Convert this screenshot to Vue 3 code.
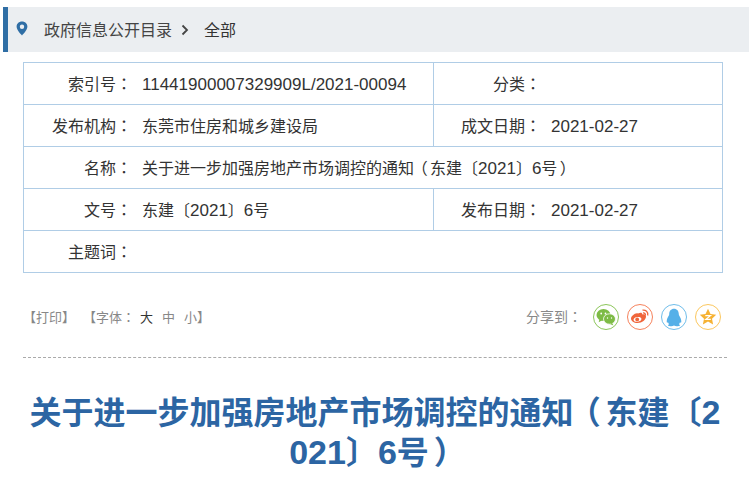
<template>
  <div class="page">
    <!-- 面包屑 -->
    <div class="crumb">
      <svg class="pin" width="12" height="15" viewBox="0 0 12 15">
        <path fill="#2f6ea5" fill-rule="evenodd" d="M6 .5C2.900.5.600 2.800.600 5.600c0 3.400 3.600 7 5.400 8.900 1.800-1.900 5.400-5.500 5.400-8.900C11.400 2.800 9.100.5 6 .5zM6 3.500a2.200 2.200 0 1 1 0 4.400 2.200 2.200 0 0 1 0-4.400z" />
      </svg>
      <span class="crumb-link">政府信息公开目录</span>
      <svg class="arrow" width="8" height="12" viewBox="0 0 8 12">
        <path fill="none" stroke="#444" stroke-width="1.800" d="M1.500 1.500 6 6l-4.500 4.500" />
      </svg>
      <span class="crumb-now">全部</span>
    </div>

    <!-- 信息表 -->
    <table class="info">
      <tbody>
        <tr>
          <td class="label">索引号<span class="p">：</span></td>
          <td class="value"><span class="num">11441900007329909L/2021-00094</span></td>
          <td class="label split">分类<span class="p">：</span></td>
          <td class="value"></td>
        </tr>
        <tr>
          <td class="label">发布机构<span class="p">：</span></td>
          <td class="value">东莞市住房和城乡建设局</td>
          <td class="label split">成文日期<span class="p">：</span></td>
          <td class="value"><span class="num">2021-02-27</span></td>
        </tr>
        <tr>
          <td class="label">名称<span class="p">：</span></td>
          <td class="value" colspan="3">关于进一步加强房地产市场调控的通知<span class="lp">（</span>东建〔<span class="num">2021</span>〕<span class="num">6</span>号<span class="rp">）</span></td>
        </tr>
        <tr>
          <td class="label">文号<span class="p">：</span></td>
          <td class="value">东建〔<span class="num">2021</span>〕<span class="num">6</span>号</td>
          <td class="label split">发布日期<span class="p">：</span></td>
          <td class="value"><span class="num">2021-02-27</span></td>
        </tr>
        <tr>
          <td class="label">主题词<span class="p">：</span></td>
          <td class="value" colspan="3"></td>
        </tr>
      </tbody>
    </table>

    <!-- 工具栏 -->
    <div class="tools">
      <div class="print">
        <span>【打印】</span>
        <span class="font-size">【字体<span class="p">：</span><b class="on">大</b><i>中</i><i>小</i>】</span>
      </div>
      <div class="share">
        <span class="share-label">分享到<span class="p">：</span></span>
        <span class="circle wx">
          <svg width="20" height="18" viewBox="0 0 20 18">
            <ellipse cx="7.500" cy="7" rx="7" ry="6" fill="#7dbb45" />
            <path d="M3.500 11l-.8 3.200 3.500-2z" fill="#7dbb45" />
            <ellipse cx="13.500" cy="11" rx="6" ry="5.200" fill="#7dbb45" stroke="#fff" stroke-width=".8" />
            <path d="M16 15l1.500 2.500-3.500-1.500z" fill="#7dbb45" />
            <circle cx="5.200" cy="5.500" r=".9" fill="#fff" />
            <circle cx="9.500" cy="5.500" r=".9" fill="#fff" />
            <circle cx="11.500" cy="10" r=".7" fill="#fff" />
            <circle cx="15.500" cy="10" r=".7" fill="#fff" />
          </svg>
        </span>
        <span class="circle wb">
          <svg width="20" height="18" viewBox="0 0 20 18">
            <path fill="#f0663c" fill-rule="evenodd" d="M8 5.500c2.500-1.500 4.500-1 4.300 1 1.900-.6 3.700 0 3.700 2 0 3-3.800 6.500-8.500 6.500C3.900 15 1 13.200 1 10.500 1 8.500 5 4.500 8 5.500zM7.500 9c-2.500.2-4.100 1.500-3.900 3 .2 1.400 1.900 2 4.200 1.800 2.300-.3 3.800-1.500 3.600-3-.2-1.300-1.600-2-3.900-1.800z" />
            <circle cx="7.200" cy="11.400" r="1.900" fill="#f0663c" />
            <path fill="none" stroke="#f0663c" stroke-width="1.300" d="M12.500 2.200c3-.7 6 1.700 5.200 5.300M13 4.900c1.500-.3 2.800 1 2.300 2.500" />
          </svg>
        </span>
        <span class="circle qq">
          <svg width="18" height="19" viewBox="0 0 18 19">
            <path fill="#55b0e8" d="M9 .8c3 0 4.800 2.300 4.800 5.200 0 .7.100 1.100.5 1.800.9 1.500 2 3.600 2 5.600 0 1.300-.5 1.700-1.300.9-.3.900-.7 1.500-1.200 2 .8.400 1.300.8 1.200 1.200-.2.500-2 .7-3.300.7-1 0-2-.3-2.700-.8-.7.500-1.700.8-2.700.8-1.300 0-3.100-.2-3.300-.7-.1-.4.400-.8 1.200-1.200-.5-.5-.9-1.100-1.200-2-.8.800-1.300.4-1.300-.9 0-2 1.100-4.100 2-5.600.4-.7.500-1.100.5-1.800C4.200 3.100 6 .8 9 .8z" />
          </svg>
        </span>
        <span class="circle qz">
          <svg width="18" height="18" viewBox="0 0 18 18">
            <path fill="#f6b233" d="M9 .8l2.500 5.300 5.700.7-4.200 3.900 1.100 5.700L9 13.600l-5.100 2.800L5 10.700.8 6.800l5.700-.7z" />
            <path fill="none" stroke="#fff" stroke-width="1.200" d="M6.300 7.600h5.200L6.800 11.300h5" />
          </svg>
        </span>
      </div>
    </div>

    <h1 class="title">关于进一步加强房地产市场调控的通知<span class="lp">（</span>东建〔<span class="num">2021</span>〕<span class="num">6</span>号<span class="rp">）</span></h1>
  </div>
</template>

<script setup>
</script>

<style>
html,
body {
  margin: 0;
  background: #fff;
  overflow: hidden;
}
</style>

<style scoped>
.page {
  width: 749px;
  height: 481px;
  padding-top: 7px;
  box-sizing: border-box;
  overflow: hidden;
  font-family: "Liberation Sans", "Noto Sans CJK SC", sans-serif;
  color: #333;
}

.crumb {
  display: flex;
  align-items: center;
  height: 45px;
  padding-top: 2px;
  box-sizing: border-box;
  margin-left: 3px;
  border-left: 5px solid #2f6ea5;
  background: #ebeef1;
  font-size: 16px;
  line-height: 22px;
  color: #444;
}

.pin {
  margin-left: 8px;
  margin-top: -4px;
}

.crumb-link {
  margin-left: 16px;
}

.arrow {
  margin-left: 9px;
  margin-top: -1px;
}

.crumb-now {
  margin-left: 15px;
  color: #333;
}

.info {
  width: 700px;
  height: 211px;
  margin: 10px 0 0 23px;
  border-collapse: collapse;
  table-layout: fixed;
  font-size: 16px;
  line-height: 24px;
  color: #333;
}

.info td {
  height: 39px;
  padding: 2px 0 0;
  border-top: 1px solid #b0cde6;
  border-bottom: 1px solid #b0cde6;
}

.info td:first-child {
  border-left: 1px solid #b0cde6;
}

.info td:last-child {
  border-right: 1px solid #b0cde6;
}

.info tr td:nth-child(1) {
  width: 108px;
}

.info tr td:nth-child(2) {
  width: 291px;
}

.info tr td:nth-child(3) {
  width: 107px;
}

.info td.split {
  border-left: 1px solid #b0cde6;
}

.label {
  text-align: right;
}

.value {
  padding-left: 10px !important;
  white-space: nowrap;
}

/* 数字略大，括号和冒号居中 */
.num {
  font-size: 1.0625em;
  line-height: 1;
}

.p {
  font-family: "Noto Sans CJK TC", sans-serif;
  line-height: 1;
}

.lp {
  margin-left: -0.15em;
  margin-right: 0.15em;
}

.rp {
  margin-left: 0.15em;
  margin-right: -0.15em;
}

.tools {
  display: flex;
  justify-content: space-between;
  align-items: flex-start;
  width: 704px;
  height: 85px;
  margin-left: 23px;
  border-bottom: 1px dashed #aaa;
  box-sizing: border-box;
  padding-top: 30px;
  color: #888;
  font-size: 13px;
  line-height: 28px;
}

.print {
  display: flex;
  gap: 8px;
  padding-top: 1px;
}

.on {
  font-weight: normal;
  margin-left: 5px;
  color: #333;
}

.font-size i {
  font-style: normal;
  margin-left: 9px;
}

.share {
  display: flex;
  align-items: center;
  gap: 8px;
  margin-right: 6px;
}

.share-label {
  margin-right: 3px;
  font-size: 14px;
}

.circle {
  display: flex;
  align-items: center;
  justify-content: center;
  width: 24px;
  height: 24px;
  border: 1px solid;
  border-radius: 50%;
}

.wx {
  border-color: #8cc65a;
}

.wb {
  border-color: #f6825c;
}

.qq {
  border-color: #6fbdea;
}

.qz {
  border-color: #fbc75e;
}

.title {
  width: 704px;
  margin: 35px 0 0 23px;
  text-align: center;
  font-size: 32px;
  line-height: 40px;
  font-weight: bold;
  color: #2c65a3;
  word-break: break-all;
}
</style>
